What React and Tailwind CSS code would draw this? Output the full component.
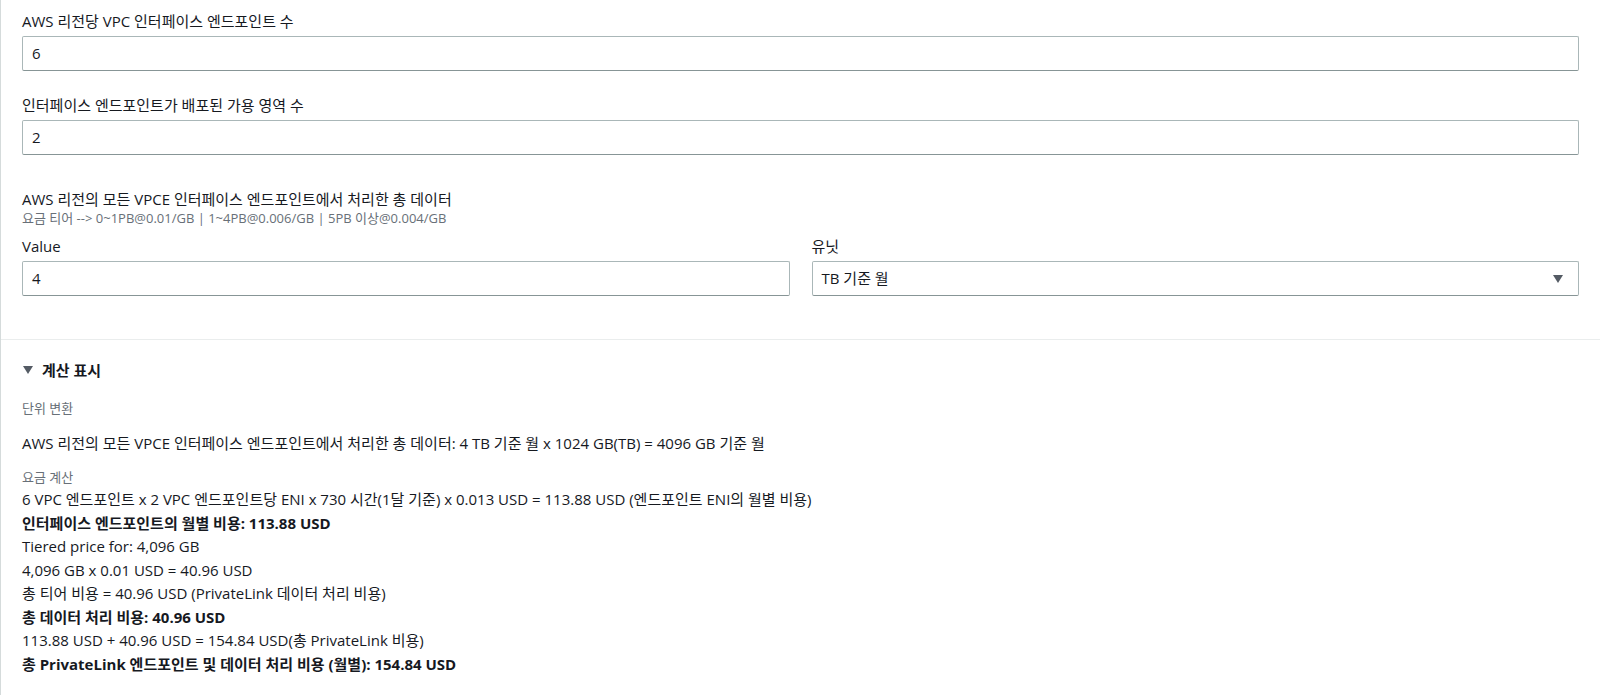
import React from 'react';

const font = { fontFamily: '"Open Sans", "Noto Sans CJK KR", sans-serif' };

const Field = ({ label, value }) => (
  <div>
    <div className="text-[15px] leading-[22px] text-[#16191f]">{label}</div>
    <div className="mt-[4px] h-[35px] border border-[#aab7b8] border-b-[#879596] rounded-[2px] flex items-center px-[9px] text-[15px] text-[#16191f]">
      {value}
    </div>
  </div>
);

const lines = [
  { t: '6 VPC 엔드포인트 x 2 VPC 엔드포인트당 ENI x 730 시간(1달 기준) x 0.013 USD = 113.88 USD (엔드포인트 ENI의 월별 비용)' },
  { t: '인터페이스 엔드포인트의 월별 비용: 113.88 USD', b: true },
  { t: 'Tiered price for: 4,096 GB' },
  { t: '4,096 GB x 0.01 USD = 40.96 USD' },
  { t: '총 티어 비용 = 40.96 USD (PrivateLink 데이터 처리 비용)' },
  { t: '총 데이터 처리 비용: 40.96 USD', b: true },
  { t: '113.88 USD + 40.96 USD = 154.84 USD(총 PrivateLink 비용)' },
  { t: '총 PrivateLink 엔드포인트 및 데이터 처리 비용 (월별): 154.84 USD', b: true },
];

export default function App() {
  return (
    <div style={font} className="w-full h-[695px] overflow-hidden bg-white border-l border-[#d5dbdb] text-[#16191f]">
      {/* inputs */}
      <div className="px-[21px] pt-[10px] pb-[43px] border-b border-[#eaeded]">
        <Field label="AWS 리전당 VPC 인터페이스 엔드포인트 수" value="6" />
        <div className="mt-[23px]">
          <Field label="인터페이스 엔드포인트가 배포된 가용 영역 수" value="2" />
        </div>
        <div className="mt-[33px]">
          <div className="text-[15px] leading-[22px]">AWS 리전의 모든 VPCE 인터페이스 엔드포인트에서 처리한 총 데이터</div>
          <div className="text-[13px] leading-[17px] text-[#687078]">
            요금 티어 --&gt; 0~1PB@0.01/GB | 1~4PB@0.006/GB | 5PB 이상@0.004/GB
          </div>
          <div className="mt-[8px] grid grid-cols-2 gap-[22px]">
            <Field label="Value" value="4" />
            <div>
              <div className="text-[15px] leading-[22px]">유닛</div>
              <div className="mt-[4px] h-[35px] border border-[#aab7b8] border-b-[#879596] rounded-[2px] flex items-center justify-between px-[9px] text-[15px]">
                <span>TB 기준 월</span>
                <svg width="12" height="10" viewBox="0 0 12 10" className="mr-[5px]">
                  <path d="M1 1h10L6 9z" fill="#545b64" />
                </svg>
              </div>
            </div>
          </div>
        </div>
      </div>

      {/* calculation */}
      <div className="px-[21px] pt-[19px]">
        <div className="flex items-center gap-[8px] text-[15px] leading-[22px] font-bold">
          <svg width="12" height="10" viewBox="0 0 12 10">
            <path d="M1 1h10L6 9z" fill="#545b64" />
          </svg>
          <span>계산 표시</span>
        </div>
        <div className="mt-[19px] text-[13px] leading-[16px] text-[#687078]">단위 변환</div>
        <div className="mt-[16px] text-[15px] leading-[22px]">
          AWS 리전의 모든 VPCE 인터페이스 엔드포인트에서 처리한 총 데이터: 4 TB 기준 월 x 1024 GB(TB) = 4096 GB 기준 월
        </div>
        <div className="mt-[15px] text-[13px] leading-[16px] text-[#687078]">요금 계산</div>
        <div className="mt-[3px]">
          {lines.map((l, i) => (
            <div key={i} className={`text-[15px] leading-[23.5px] ${l.b ? 'font-bold' : ''}`}>{l.t}</div>
          ))}
        </div>
      </div>
    </div>
  );
}
